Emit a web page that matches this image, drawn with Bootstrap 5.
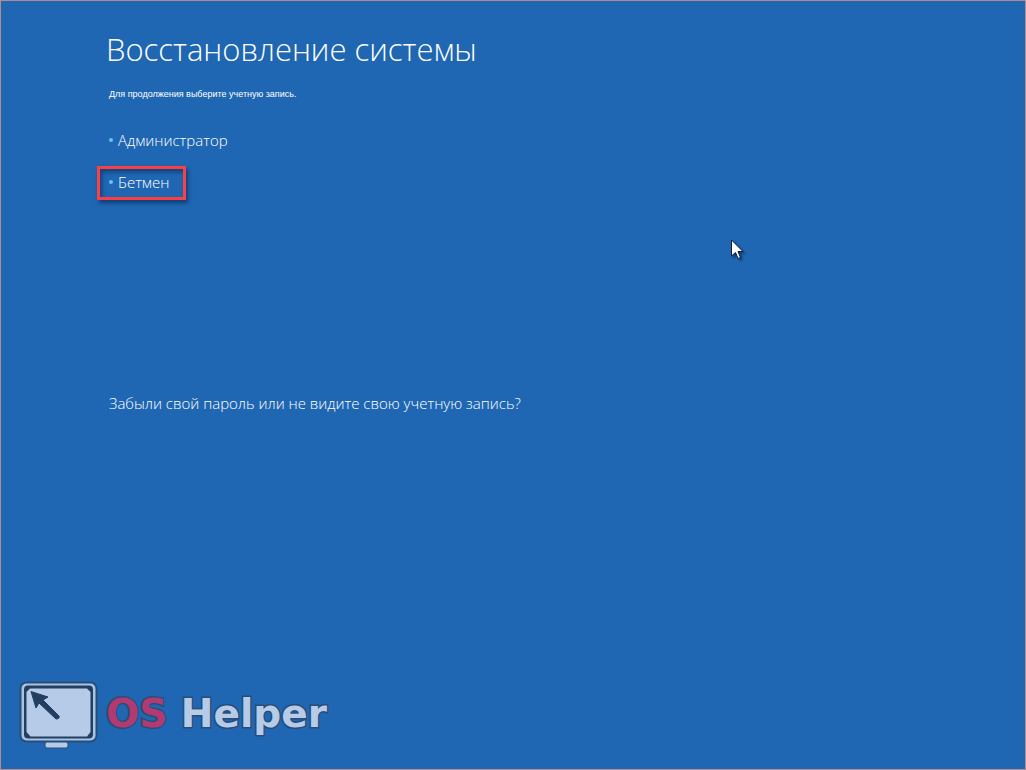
<!DOCTYPE html>
<html lang="ru">
<head>
<meta charset="utf-8">
<meta name="viewport" content="width=device-width, initial-scale=1">
<title>Восстановление системы</title>
<link rel="stylesheet" href="https://cdn.jsdelivr.net/npm/bootstrap@5.3.0/dist/css/bootstrap.min.css">
<style>
  body { background: #1f67b2; color: #fff; font-family: "Open Sans", "Noto Sans", sans-serif; }
  .screen { border: 1px solid #b48c90; }
  .recovery { padding: 28px 24px 0 96px; }
  .recovery-title { font-size: 31px; line-height: 40px; font-weight: 300; margin: 0 0 15px 9px; }
  .recovery-hint { font-family: "Liberation Sans", sans-serif; font-size: 9px; line-height: 20px; margin: 0 0 20px 12px; }
  .account { border: 3px solid transparent; background: none; color: #fff; height: 34px; padding: 0 14px 3px 9px; font-size: 15px; line-height: 24px; font-weight: 300; }
  .account::before { content: ""; width: 4px; height: 4px; border-radius: 50%; background: #62c6ee; margin-right: 5px; }
  .account-marked { border-color: #fb4045; box-shadow: 2px 3px 4px rgba(0,20,60,.5), inset 2px 3px 4px rgba(0,20,60,.45); }
  .forgot { font-size: 15px; line-height: 24px; font-weight: 300; color: #fff; margin: 191px 0 0 12px; }
  .pointer { position: absolute; left: 730px; top: 238px; filter: drop-shadow(2px 2px 1px rgba(0,20,60,.5)); }
  .brand { padding: 0 0 20px 18px; }
  .brand-name { font-family: "DejaVu Sans", sans-serif; font-size: 39px; line-height: 44px; font-weight: 700; color: #b5cbe7; padding-bottom: 2px; -webkit-text-stroke: 3px #294d78; paint-order: stroke fill; }
  .brand-os { color: #b23a72; }
</style>
</head>
<body>
<div class="screen min-vh-100 d-flex flex-column justify-content-between position-relative">
  <main class="recovery">
    <h1 class="recovery-title">Восстановление системы</h1>
    <p class="recovery-hint">Для продолжения выберите учетную запись.</p>
    <div class="d-flex flex-column align-items-start gap-2">
      <button type="button" class="account d-flex align-items-center">Администратор</button>
      <button type="button" class="account account-marked d-flex align-items-center">Бетмен</button>
    </div>
    <a href="#" class="forgot d-inline-block text-decoration-none">Забыли свой пароль или не видите свою учетную запись?</a>
  </main>
  <footer class="brand d-flex align-items-center gap-2">
    <svg width="79" height="68" viewBox="0 0 79 68" aria-hidden="true">
      <rect x="1.5" y="1.5" width="76" height="59" rx="6" fill="#a9c5e4" stroke="#294d78" stroke-width="2"/>
      <rect x="5" y="4.500" width="69" height="53" rx="4" fill="#223f62"/>
      <path d="M11 7.500H68L71.500 11V51L68 55.500H11.500L7.500 51V11Z" fill="#b5cbe7"/>
      <path d="M12 10.500L29 16L24 19L40 35Q41 38 37 38L20 22L17 27Z" fill="#223f62" stroke="#223f62" stroke-linejoin="round"/>
      <rect x="26" y="61" width="23" height="6" rx="2" fill="#b5cbe7" stroke="#294d78"/>
    </svg>
    <div class="brand-name"><span class="brand-os">OS</span> Helper</div>
  </footer>
  <svg class="pointer" width="13" height="21" viewBox="0 0 13 21" aria-hidden="true">
    <path d="M.5 1V17L4.500 13.500L7 19.500L9.500 18.500L7 12.500H12Z" fill="#fff" stroke="#101c38"/>
  </svg>
</div>
<script src="https://cdn.jsdelivr.net/npm/bootstrap@5.3.0/dist/js/bootstrap.bundle.min.js"></script>
</body>
</html>
